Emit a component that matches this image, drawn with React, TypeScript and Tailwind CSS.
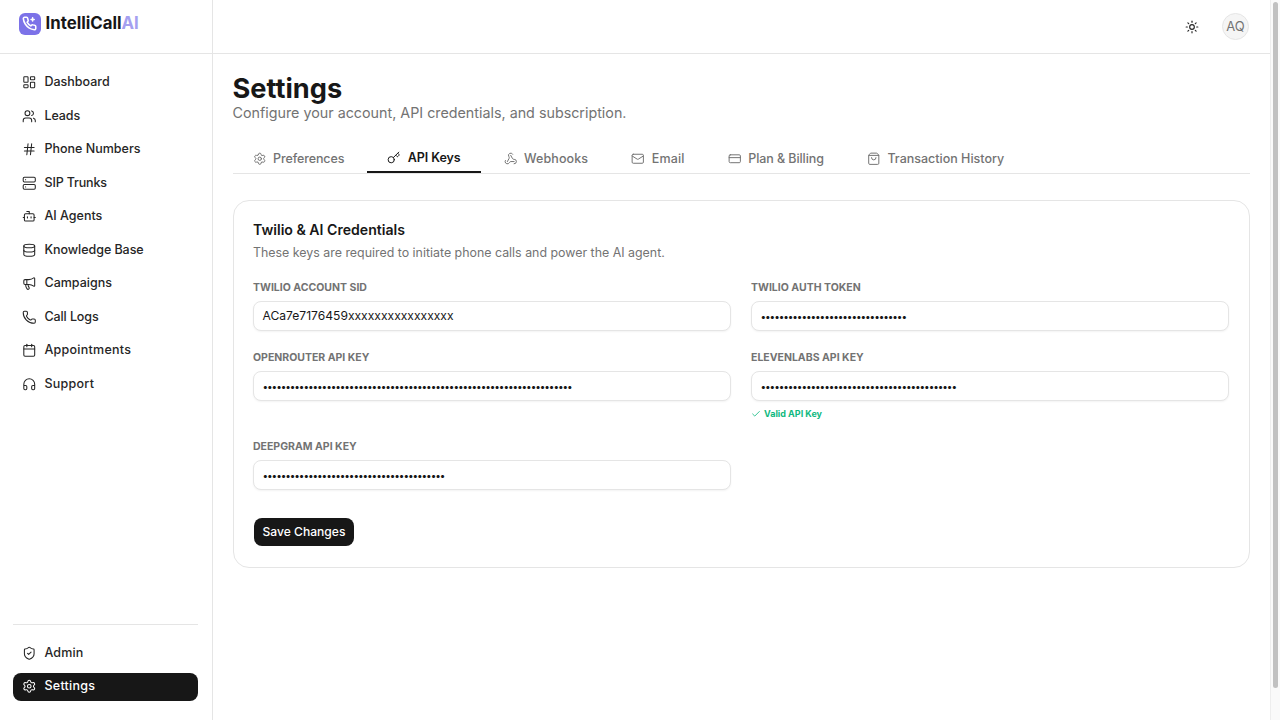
import React from 'react';
import { LayoutDashboard, Users, Hash, Server, Bot, Database, Megaphone, Phone, Calendar, Headphones, ShieldCheck, Settings, Sun, Key, Webhook, Mail, CreditCard, ShoppingBag, Check } from 'lucide-react';

const nav = [
  [LayoutDashboard, 'Dashboard', 'tracking-normal'],
  [Users, 'Leads', 'tracking-[-0.1px]'],
  [Hash, 'Phone Numbers', 'tracking-normal'],
  [Server, 'SIP Trunks', 'tracking-[-0.15px]'],
  [Bot, 'AI Agents', 'tracking-normal'],
  [Database, 'Knowledge Base', 'tracking-[-0.05px]'],
  [Megaphone, 'Campaigns', 'tracking-normal'],
  [Phone, 'Call Logs', 'tracking-[-0.1px]'],
  [Calendar, 'Appointments', 'tracking-[0.25px]'],
  [Headphones, 'Support', 'tracking-[0.25px]'],
] as const;

const tabs = [
  [Settings, 'Preferences', false, 'tracking-[-0.1px]'],
  [Key, 'API Keys', true, 'tracking-[-0.1px]'],
  [Webhook, 'Webhooks', false, 'tracking-[0.1px]'],
  [Mail, 'Email', false, 'tracking-[0.2px]'],
  [CreditCard, 'Plan & Billing', false, 'tracking-[-0.07px]'],
  [ShoppingBag, 'Transaction History', false, 'tracking-normal'],
] as const;

function NavItem({ icon: Icon, label, active, track }: { icon: React.ElementType; label: string; active?: boolean; track?: string }) {
  return (
    <a className={`flex h-[28px] items-center gap-[8px] rounded-lg px-[9px] text-[12.5px] font-medium ${track ?? ''} ${active ? 'bg-[#171717] text-white' : 'text-[#262626]'}`}>
      <Icon className="h-[14.5px] w-[14.5px] shrink-0" strokeWidth={1.75} />
      <span>{label}</span>
    </a>
  );
}

function Field({ label, value, masked, valid }: { label: string; value: string; masked?: boolean; valid?: boolean }) {
  return (
    <div className="flex flex-col">
      <label className="mb-[5px] text-[10.5px] leading-[16px] font-bold text-[#737373]">{label}</label>
      <div className={`flex h-[30px] items-center rounded-lg border border-[#e5e5e5] bg-white px-[8.5px] text-[#171717] shadow-xs ${masked ? 'text-[10px] tracking-[-1.08px]' : 'text-[12.1px]'}`}>{value}</div>
      {valid && (
        <div className="mt-[7px] flex items-center gap-[3px] text-[9px] leading-[12px] font-bold text-[#10b981]">
          <Check className="h-[10px] w-[10px]" strokeWidth={2} />
          Valid API Key
        </div>
      )}
    </div>
  );
}

export default function App() {
  return (
    <div className="flex h-[720px] w-[1280px] overflow-hidden bg-white font-['Inter',sans-serif]">
      <aside className="flex w-[212.5px] shrink-0 flex-col border-r border-[#e5e5e5]">
        <div className="flex h-[54px] items-center gap-[5px] border-b border-[#e5e5e5] pr-[18px] pb-[6px] pl-[18.5px]">
          <div className="flex h-[22px] w-[22px] items-center justify-center rounded-md bg-[#7c72e8]">
            <svg viewBox="0 0 24 24" className="h-[15px] w-[15px]" fill="none" stroke="white" strokeWidth="2.5" strokeLinecap="round" strokeLinejoin="round">
              <path d="M22 16.92v3a2 2 0 0 1-2.18 2 19.79 19.79 0 0 1-8.63-3.07 19.5 19.5 0 0 1-6-6 19.79 19.79 0 0 1-3.07-8.67A2 2 0 0 1 4.11 2h3a2 2 0 0 1 2 1.72 12.84 12.84 0 0 0 .7 2.81 2 2 0 0 1-.45 2.11L8.09 9.91a16 16 0 0 0 6 6l1.27-1.27a2 2 0 0 1 2.11-.45 12.84 12.84 0 0 0 2.81.7A2 2 0 0 1 22 16.92z" />
              <path d="M17 3v5M14.5 5.5h5" />
            </svg>
          </div>
          <span className="text-[16.8px] font-bold text-[#171717]">IntelliCall<span className="text-[#a5a0f0]">AI</span></span>
        </div>
        <nav className="flex flex-col gap-[5.5px] pt-[14.7px] pr-[14px] pl-[13px]">
          {nav.map(([Icon, label, track]) => <NavItem key={label} icon={Icon} label={label} track={track} />)}
        </nav>
        <div className="mt-auto mr-[14px] mb-[19.5px] ml-[13px] flex flex-col gap-[5.5px] border-t border-[#e5e5e5] pt-[14px]">
          <NavItem icon={ShieldCheck} label="Admin" track="tracking-[0.1px]" />
          <NavItem icon={Settings} label="Settings" active track="tracking-[0.25px]" />
        </div>
      </aside>
      <div className="flex min-w-0 flex-1 flex-col">
        <header className="flex h-[54px] shrink-0 items-center justify-end gap-[23px] border-b border-[#e5e5e5] pr-[20.5px]">
          <Sun className="h-[14px] w-[14px] text-[#262626]" strokeWidth={2} />
          <div className="flex h-[27px] w-[27px] items-center justify-center rounded-full border border-[#e5e5e5] bg-[#f5f5f5] text-[13px] text-[#737373]">AQ</div>
        </header>
        <main className="flex flex-col px-[20px] pt-[20px]">
          <h1 className="text-[27.2px] leading-[30px] font-bold text-[#171717]">Settings</h1>
          <p className="text-[14.3px] leading-[17px] text-[#737373]">Configure your account, API credentials, and subscription.</p>
          <div className="mt-[23px] flex h-[30px] gap-[3px] border-b border-[#e5e5e5]">
            {tabs.map(([Icon, label, active, track]) => (
              <div key={label} className={`flex items-center justify-center gap-[7px] px-[20px] pt-[1px] text-[12.5px] ${track} ${active ? 'border-b-2 border-[#171717] font-semibold text-[#171717]' : 'font-medium text-[#737373]'}`}>
                <Icon className="h-[13.5px] w-[13.5px]" strokeWidth={1.75} />
                {label}
              </div>
            ))}
          </div>
          <section className="mt-[26px] rounded-2xl border border-[#e5e5e5] bg-white px-[19.5px] pt-[19px] pb-[21px]">
            <h2 className="text-[14.1px] leading-[20px] font-semibold text-[#171717]">Twilio &amp; AI Credentials</h2>
            <p className="mt-[3px] text-[12.4px] leading-[20px] text-[#737373]">These keys are required to initiate phone calls and power the AI agent.</p>
            <div className="mt-[17px] grid grid-cols-2 items-start gap-x-[20px] gap-y-[19px]">
              <Field label="TWILIO ACCOUNT SID" value="ACa7e7176459xxxxxxxxxxxxxxxx" />
              <Field label="TWILIO AUTH TOKEN" value={'•'.repeat(32)} masked />
              <Field label="OPENROUTER API KEY" value={'•'.repeat(68)} masked />
              <Field label="ELEVENLABS API KEY" value={'•'.repeat(43)} masked valid />
              <Field label="DEEPGRAM API KEY" value={'•'.repeat(40)} masked />
            </div>
            <button className="mt-[28px] ml-[0.5px] block h-[28px] rounded-lg bg-[#171717] px-[9px] text-[12.1px] font-medium text-white">Save Changes</button>
          </section>
        </main>
      </div>
      <div className="w-[10.5px] shrink-0 border-l border-[#eeeeee] bg-[#fafafa] px-[2.5px] pt-[2px]"><div className="h-[686px] rounded-full bg-[#c1c1c1]" /></div>
    </div>
  );
}
